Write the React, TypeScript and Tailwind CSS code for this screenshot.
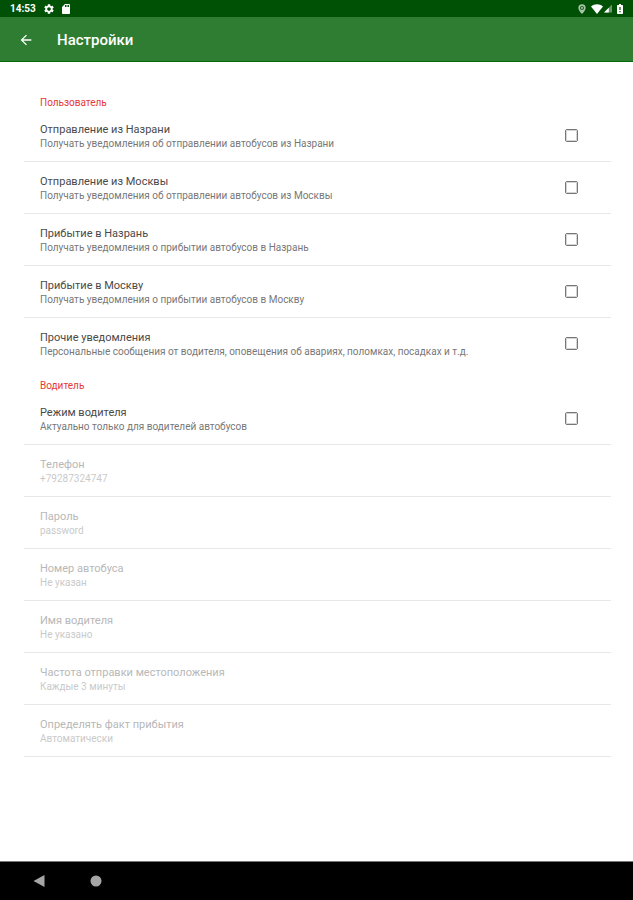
import React, { useState } from 'react';
import { MdArrowBack, MdSettings, MdSdCard } from 'react-icons/md';

interface Option {
  id: string;
  title: string;
  summary: string;
}

const userOptions: Option[] = [
  { id: 'dep-nazran', title: 'Отправление из Назрани', summary: 'Получать уведомления об отправлении автобусов из Назрани' },
  { id: 'dep-moscow', title: 'Отправление из Москвы', summary: 'Получать уведомления об отправлении автобусов из Москвы' },
  { id: 'arr-nazran', title: 'Прибытие в Назрань', summary: 'Получать уведомления о прибытии автобусов в Назрань' },
  { id: 'arr-moscow', title: 'Прибытие в Москву', summary: 'Получать уведомления о прибытии автобусов в Москву' },
  { id: 'other', title: 'Прочие уведомления', summary: 'Персональные сообщения от водителя, оповещения об авариях, поломках, посадках и т.д.' },
];

const driverMode: Option = {
  id: 'driver-mode',
  title: 'Режим водителя',
  summary: 'Актуально только для водителей автобусов',
};

const driverFields: Option[] = [
  { id: 'phone', title: 'Телефон', summary: '+79287324747' },
  { id: 'password', title: 'Пароль', summary: 'password' },
  { id: 'bus', title: 'Номер автобуса', summary: 'Не указан' },
  { id: 'name', title: 'Имя водителя', summary: 'Не указано' },
  { id: 'rate', title: 'Частота отправки местоположения', summary: 'Каждые 3 минуты' },
  { id: 'arrival', title: 'Определять факт прибытия', summary: 'Автоматически' },
];

const StatusBar = () => (
  <div className="flex h-[17px] items-center justify-between bg-[#005005] pl-[10px] pr-[10px] text-white">
    <div className="flex items-center">
      <span className="w-[33px] text-[10px] leading-3 font-bold">14:53</span>
      <MdSettings className="h-3 w-3" />
      <MdSdCard className="ml-[5px] h-3 w-3" />
    </div>
    <div className="flex items-center">
      {/* location */}
      <svg viewBox="0 0 10 12" className="h-[10px] w-2 text-[#a9c4aa]" fill="currentColor">
        <path fillRule="evenodd" d="M5 0a4.5 4.5 0 0 0-4.5 4.6C.5 8 5 12 5 12s4.500-4 4.500-7.400A4.500 4.500 0 0 0 5 0Zm0 2.200a2.400 2.400 0 1 0 0 4.800 2.400 2.400 0 0 0 0-4.800Z" />
        <circle cx="5" cy="4.600" r="1.300" />
      </svg>
      {/* wifi */}
      <svg viewBox="0 0 12 10" className="ml-[5px] h-[10px] w-3" fill="currentColor">
        <path d="M0 2.600C3.500-.4 8.500-.4 12 2.600L6 10Z" />
      </svg>
      {/* signal */}
      <svg viewBox="0 0 10 10" className="ml-px h-[9px] w-2" fill="currentColor">
        <path d="M10 0v10H0Z" opacity="0.4" />
        <path d="M6 4v6H0Z" />
      </svg>
      {/* battery */}
      <svg viewBox="0 0 6 10" className="ml-[5px] h-[10px] w-[6px]">
        <path fill="currentColor" d="M2 0h2v1h1.300q.7 0 .7.700v7.600q0 .7-.7.700H.7Q0 10 0 9.300V1.700Q0 1 .7 1H2Z" />
        <path fill="#005005" d="M2.400 3h1.200v3H2.400ZM2.400 7h1.200v1.200H2.400Z" />
      </svg>
    </div>
  </div>
);

const SectionTitle = ({ children }: { children: React.ReactNode }) => (
  <h2 className="flex h-6 items-center px-4 pt-[10px] text-[10px] leading-[14px] text-[#e53935]">{children}</h2>
);

const RowText = ({ option }: { option: Option }) => (
  <span className="flex min-w-0 flex-col text-left">
    <span className="text-[11px] leading-4">{option.title}</span>
    <span className="text-[10px] leading-3 opacity-75">{option.summary}</span>
  </span>
);

interface CheckRowProps {
  option: Option;
  checked: boolean;
  onToggle: (id: string) => void;
}

const CheckRow = ({ option, checked, onToggle }: CheckRowProps) => (
  <label htmlFor={option.id} className="flex h-[51px] items-center justify-between pl-4 pr-[33px] text-[#4a4a4a]">
    <RowText option={option} />
    <input
      id={option.id}
      type="checkbox"
      checked={checked}
      onChange={() => onToggle(option.id)}
      className="h-[13px] w-[13px] shrink-0 appearance-none rounded-xs border border-[#777777] outline-1 -outline-offset-2 outline-[#d4d4d4] checked:bg-[#2e7d32]"
    />
  </label>
);

export default function App() {
  const [enabled, setEnabled] = useState<Record<string, boolean>>({});

  const handleToggle = (id: string) => {
    setEnabled((prev) => ({ ...prev, [id]: !prev[id] }));
  };

  return (
    <div className="flex min-h-screen flex-col bg-white font-['Roboto',sans-serif]">
      <StatusBar />
      <header className="flex h-[45px] items-center border-b border-[#006b0a] bg-[#2e7d32] pt-[2px] pl-[18px] text-white">
        <button aria-label="Назад" className="mr-[23px] flex h-4 w-4 items-center justify-center">
          <MdArrowBack className="h-4 w-4" />
        </button>
        <h1 className="text-[15px] leading-5 font-medium">Настройки</h1>
      </header>

      <main className="flex-1 py-6 pr-[22px] pl-6">
        <section>
          <SectionTitle>Пользователь</SectionTitle>
          <div className="divide-y divide-[#e8e8e8]">
            {userOptions.map((option) => (
              <div key={option.id}>
                <CheckRow option={option} checked={!!enabled[option.id]} onToggle={handleToggle} />
              </div>
            ))}
          </div>
        </section>

        <section>
          <SectionTitle>Водитель</SectionTitle>
          <div className="divide-y divide-[#e8e8e8] border-b border-[#e8e8e8]">
            <div>
              <CheckRow option={driverMode} checked={!!enabled[driverMode.id]} onToggle={handleToggle} />
            </div>
            {driverFields.map((field) => (
              <div key={field.id}>
                <button disabled={!enabled[driverMode.id]} className="flex h-[51px] w-full items-center px-4 text-[#4a4a4a] disabled:text-[#b8b8b8]">
                  <RowText option={field} />
                </button>
              </div>
            ))}
          </div>
        </section>
      </main>

      <nav className="flex h-[39px] items-center border-t border-[#777777] bg-black pl-[33px] text-[#a6a6a6]">
        <button aria-label="Назад">
          <svg viewBox="0 0 12 12" className="h-3 w-3" fill="currentColor">
            <path d="M11.500 0v12L.5 6Z" />
          </svg>
        </button>
        <button aria-label="Домой" className="ml-[45px]">
          <svg viewBox="0 0 12 12" className="h-3 w-3" fill="currentColor">
            <circle cx="6" cy="6" r="5.500" />
          </svg>
        </button>
      </nav>
    </div>
  );
}
